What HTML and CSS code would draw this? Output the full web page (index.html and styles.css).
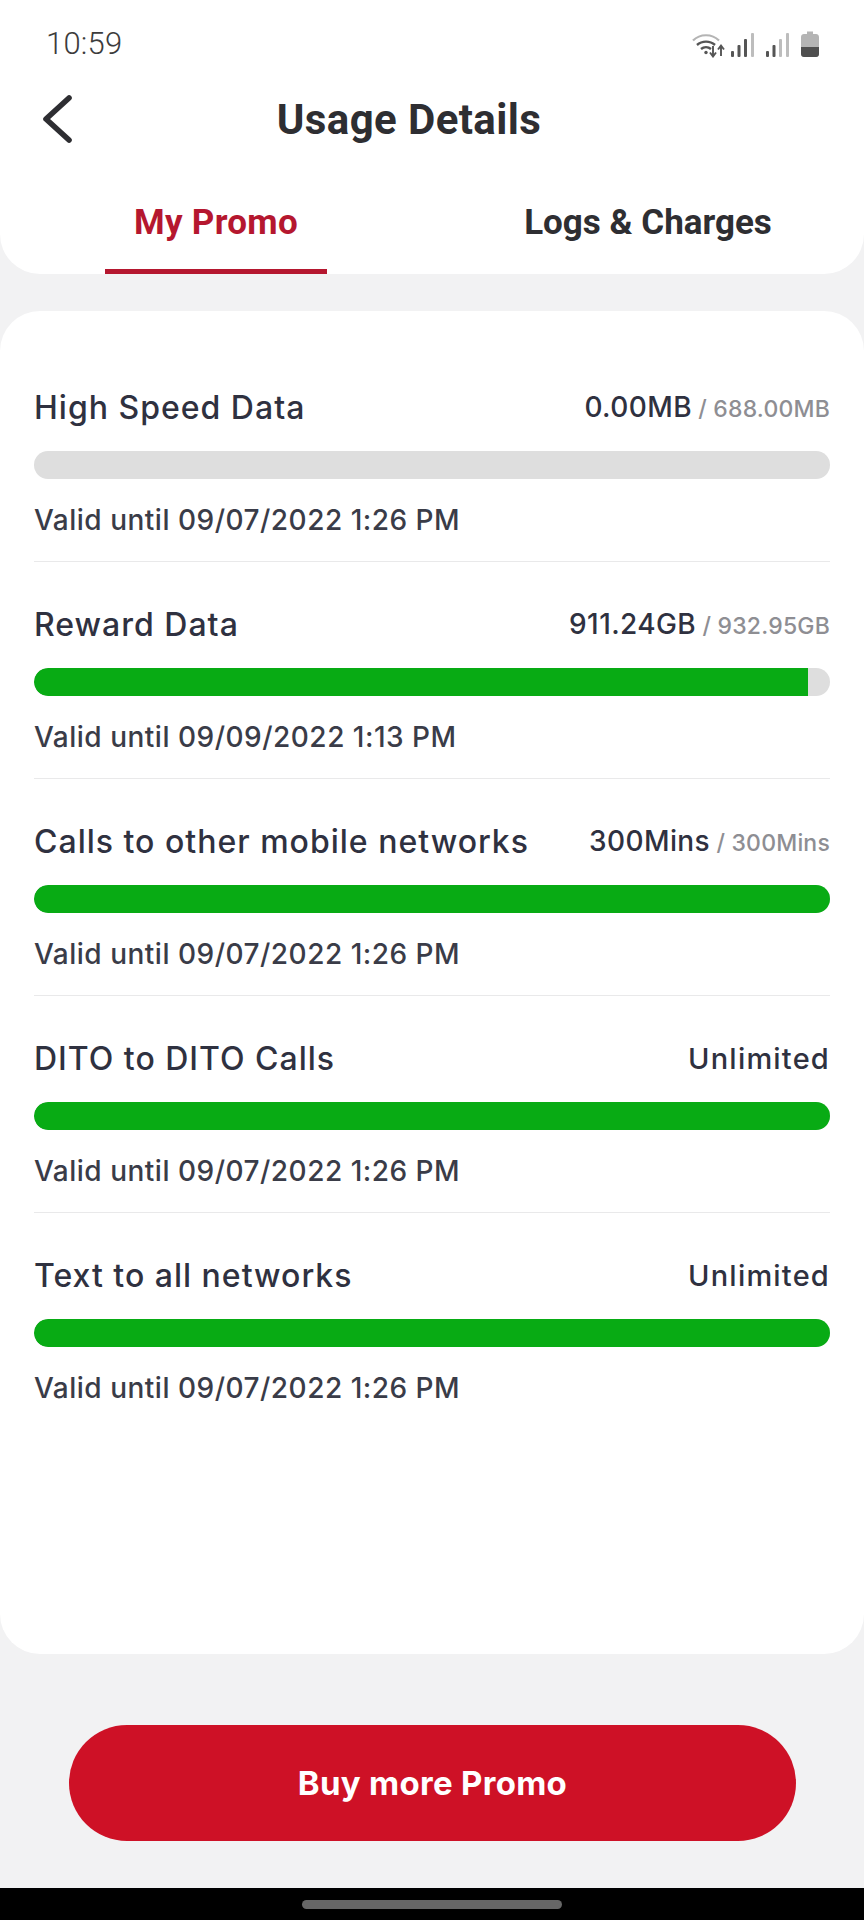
FILE: index.html
```html
<!DOCTYPE html>
<html lang="en">
<head>
<meta charset="utf-8">
<title>Usage Details</title>
<link rel="stylesheet" href="styles.css">
</head>
<body>
<div class="screen">
  <header class="top">
    <div class="status">
      <span class="time">10:59</span>
      <div class="status-icons">
        <svg class="ic-wifi" width="33" height="26" viewBox="0 0 33 26" fill="none">
          <path d="M1 8.5C8 1.5 20 1.5 27 8.5" stroke="#b4b4b4" stroke-width="2.2"/>
          <path d="M5 13C10 8.5 18 8.5 23 13" stroke="#555" stroke-width="2.4"/>
          <path d="M9 17C12 14.5 16 14.5 19 17" stroke="#555" stroke-width="2.4"/>
          <circle cx="14" cy="20.5" r="1.7" fill="#555"/>
          <path d="M21 14V24M18 20.5L21 24.5L24 20.5" stroke="#555" stroke-width="1.9"/>
          <path d="M29 24V14M26 17.5L29 13.5L32 17.5" stroke="#555" stroke-width="1.9"/>
        </svg>
        <svg class="ic-signal" width="24" height="24" viewBox="0 0 24 24">
          <rect x="0" y="18" width="3" height="6" rx="1" fill="#555"/>
          <rect x="6.5" y="12" width="3" height="12" rx="1" fill="#555"/>
          <rect x="13" y="6" width="3" height="18" rx="1" fill="#555"/>
          <rect x="20" y="0" width="3" height="24" rx="1" fill="#bdbdbd"/>
        </svg>
        <svg class="ic-signal-b" width="24" height="24" viewBox="0 0 24 24">
          <rect x="0" y="18" width="3" height="6" rx="1" fill="#555"/>
          <rect x="6.5" y="12" width="3" height="12" rx="1" fill="#555"/>
          <rect x="13" y="6" width="3" height="18" rx="1" fill="#bdbdbd"/>
          <rect x="20" y="0" width="3" height="24" rx="1" fill="#bdbdbd"/>
        </svg>
        <svg class="ic-battery" width="18" height="26" viewBox="0 0 18 26">
          <path d="M6 0.5H12V3H15C16.7 3 18 4.3 18 6V23C18 24.7 16.7 26 15 26H3C1.3 26 0 24.7 0 23V6C0 4.3 1.3 3 3 3H6Z" fill="#b4b4b4"/>
          <path d="M0 16H18V23C18 24.7 16.7 26 15 26H3C1.3 26 0 24.7 0 23Z" fill="#4f4f4f"/>
        </svg>
      </div>
    </div>
    <div class="titlebar">
      <svg class="back" width="30" height="50" viewBox="0 0 30 50" fill="none">
        <path d="M27 4L4 25L27 46" stroke="#2e2e32" stroke-width="5.6" stroke-linecap="round" stroke-linejoin="round"/>
      </svg>
      <h1 class="title">Usage Details</h1>
    </div>
    <nav class="tabs">
      <div class="tab tab-active"><span class="tab-label">My Promo</span></div>
      <div class="tab"><span class="tab-label">Logs &amp; Charges</span></div>
    </nav>
  </header>

  <main class="card">
    <section class="row">
      <div class="row-head"><span class="name">High Speed Data</span><span class="amount">0.00MB<span class="total"> / 688.00MB</span></span></div>
      <div class="bar"></div>
      <p class="valid">Valid until 09/07/2022 1:26 PM</p>
    </section>
    <section class="row">
      <div class="row-head"><span class="name">Reward Data</span><span class="amount">911.24GB<span class="total"> / 932.95GB</span></span></div>
      <div class="bar"><div class="fill" style="width:97.2%"></div></div>
      <p class="valid">Valid until 09/09/2022 1:13 PM</p>
    </section>
    <section class="row">
      <div class="row-head"><span class="name">Calls to other mobile networks</span><span class="amount">300Mins<span class="total"> / 300Mins</span></span></div>
      <div class="bar"><div class="fill" style="width:100%"></div></div>
      <p class="valid">Valid until 09/07/2022 1:26 PM</p>
    </section>
    <section class="row">
      <div class="row-head"><span class="name">DITO to DITO Calls</span><span class="amount unlimited">Unlimited</span></div>
      <div class="bar"><div class="fill" style="width:100%"></div></div>
      <p class="valid">Valid until 09/07/2022 1:26 PM</p>
    </section>
    <section class="row">
      <div class="row-head"><span class="name">Text to all networks</span><span class="amount unlimited">Unlimited</span></div>
      <div class="bar"><div class="fill" style="width:100%"></div></div>
      <p class="valid">Valid until 09/07/2022 1:26 PM</p>
    </section>
  </main>

  <footer class="actions">
    <button class="buy" type="button">Buy more Promo</button>
  </footer>

  <div class="navbar"><span class="home"></span></div>
</div>
</body>
</html>
```

FILE: styles.css
```css
* { box-sizing: border-box; }
html, body { margin: 0; padding: 0; }
body { font-family: "Inter", "Liberation Sans", sans-serif; background: #f2f2f3; }
.screen { width: 864px; height: 1920px; display: flex; flex-direction: column; overflow: hidden; background: #f2f2f3; }

.top { height: 274px; background: #fff; border-radius: 0 0 40px 40px; display: flex; flex-direction: column; flex: none; }
.status { height: 86px; padding: 24px 45px 0 46px; display: flex; justify-content: space-between; align-items: flex-start; }
.time { font-family: "Roboto", sans-serif; font-weight: 300; font-size: 31px; line-height: 40px; letter-spacing: 0.2px; color: #3c3c3c; }
.status-icons { display: flex; align-items: flex-start; padding-top: 7px; }
.ic-wifi { margin-top: 1px; }
.ic-signal { margin-left: 6px; margin-top: 2px; }
.ic-signal-b { margin-left: 11px; margin-top: 2px; }
.ic-battery { margin-left: 11px; }

.titlebar { height: 66px; display: flex; align-items: center; padding-left: 42px; }
.back { flex: none; }
.title { flex: 1; margin: 0; padding: 2px 118px 0 0; text-align: center; font-family: "Roboto", sans-serif; font-weight: 700; font-size: 42px; line-height: 50px; letter-spacing: 0.4px; color: #2e2e32; }

.tabs { flex: 1; display: grid; grid-template-columns: 1fr 1fr; }
.tab { display: flex; align-items: flex-start; justify-content: center; padding-top: 48px; }
.tab-label { width: 222px; height: 74px; text-align: center; font-family: "Roboto", sans-serif; font-weight: 700; font-size: 35px; line-height: 46px; color: #2e2e32; white-space: nowrap; display: flex; justify-content: center; }
.tab-active .tab-label { color: #b5172f; border-bottom: 5px solid #b5172f; letter-spacing: 0.3px; }

.card { flex: 1; margin-top: 37px; background: #fff; border-radius: 40px; padding: 34px 34px 0; }
.row { padding: 45px 0 23px; border-bottom: 1px solid #e9e9ea; }
.row:last-child { border-bottom: 0; }
.row-head { display: flex; justify-content: space-between; align-items: center; height: 36px; }
.name { font-weight: 500; font-size: 32px; line-height: 36px; letter-spacing: 1px; color: #2f3140; }
.amount { font-weight: 500; font-size: 28px; line-height: 36px; letter-spacing: 0.4px; color: #2f3140; white-space: nowrap; }
.unlimited { font-size: 29px; letter-spacing: 1.2px; }
.total { font-size: 23px; letter-spacing: 0.2px; color: #8e8e93; }
.bar { height: 28px; margin-top: 25px; border-radius: 14px; background: #dedede; overflow: hidden; }
.fill { height: 100%; background: #08ab14; border-radius: 14px 0 0 14px; }
.valid { margin: 23px 0 0; font-weight: 500; font-size: 28px; line-height: 36px; letter-spacing: 0.5px; color: #3a3c48; }

.actions { flex: none; padding: 71px 68px 47px 69px; }
.buy { display: block; width: 100%; height: 116px; border: 0; border-radius: 58px; background: #ce1126; color: #fff; font-family: "Inter", sans-serif; font-weight: 700; font-size: 33px; letter-spacing: 0.3px; }

.navbar { flex: none; height: 32px; background: #000; display: flex; justify-content: center; padding-top: 12px; }
.home { width: 260px; height: 9px; border-radius: 5px; background: #666; }
```
